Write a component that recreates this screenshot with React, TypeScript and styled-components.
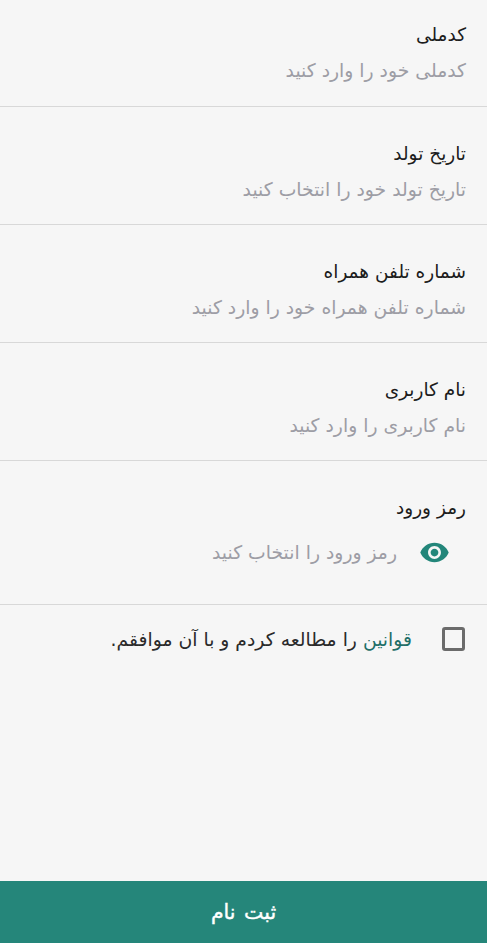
import * as React from "react"
import styled, { createGlobalStyle } from "styled-components"
import { MdVisibility } from "react-icons/md"

const GlobalStyle = createGlobalStyle`
  html, body {
    margin: 0;
    padding: 0;
    background: #f6f6f6;
  }
  * {
    box-sizing: border-box;
  }
`

const Page = styled.div`
  width: 487px;
  height: 943px;
  display: flex;
  flex-direction: column;
  direction: rtl;
  background: #f6f6f6;
  font-family: "DejaVu Sans", "Noto Sans", sans-serif;
  overflow: hidden;
`

const Form = styled.div`
  flex: 1;
`

const Field = styled.div`
  height: 118px;
  padding: 32px 21px 0;
  border-bottom: 1px solid #d8d8d8;

  &:first-child {
    height: 107px;
    padding-top: 20px;
  }
`

const PasswordField = styled(Field)`
  height: 144px;
`

const Label = styled.div`
  font-size: 18.5px;
  line-height: 30px;
  color: #1c1c1c;
`

const Placeholder = styled.div`
  font-size: 18.8px;
  line-height: 30px;
  margin-top: 6px;
  color: #9d9da5;
`

const PasswordRow = styled.div`
  display: flex;
  align-items: center;
  gap: 22px;
  margin-top: 14px;
  padding-right: 16px;
  color: #23867a;
`

const PasswordHint = styled(Placeholder)`
  margin-top: 0;
`

const Terms = styled.div`
  display: flex;
  align-items: center;
  gap: 30px;
  padding: 21px 22px 0;
  font-size: 18.8px;
  line-height: 28px;
  color: #2a2a2a;
`

const Check = styled.span`
  width: 23px;
  height: 24px;
  flex: none;
  margin-top: -2px;
  border: 3px solid #6b6b6b;
  border-radius: 3px;
`

const TermsLink = styled.span`
  color: #1f6f68;
`

const Submit = styled.button`
  height: 62px;
  border: 0;
  padding: 0;
  background: #25867a;
  color: #fff;
  font-family: inherit;
  font-size: 20.5px;
  font-weight: 400;
  word-spacing: 2px;
  -webkit-text-stroke: 0.4px #fff;
`

const fields = [
  { label: "کدملی", hint: "کدملی خود را وارد کنید" },
  { label: "تاریخ تولد", hint: "تاریخ تولد خود را انتخاب کنید" },
  { label: "شماره تلفن همراه", hint: "شماره تلفن همراه خود را وارد کنید" },
  { label: "نام کاربری", hint: "نام کاربری را وارد کنید" },
]

const App: React.FC = () => (
  <Page>
    <GlobalStyle />
    <Form>
      {fields.map((f) => (
        <Field key={f.label}>
          <Label>{f.label}</Label>
          <Placeholder>{f.hint}</Placeholder>
        </Field>
      ))}
      <PasswordField>
        <Label>رمز ورود</Label>
        <PasswordRow>
          <MdVisibility size={31} />
          <PasswordHint>رمز ورود را انتخاب کنید</PasswordHint>
        </PasswordRow>
      </PasswordField>
      <Terms>
        <Check />
        <span>
          <TermsLink>قوانین</TermsLink> را مطالعه کردم و با آن موافقم.
        </span>
      </Terms>
    </Form>
    <Submit>ثبت نام</Submit>
  </Page>
)

export default App
